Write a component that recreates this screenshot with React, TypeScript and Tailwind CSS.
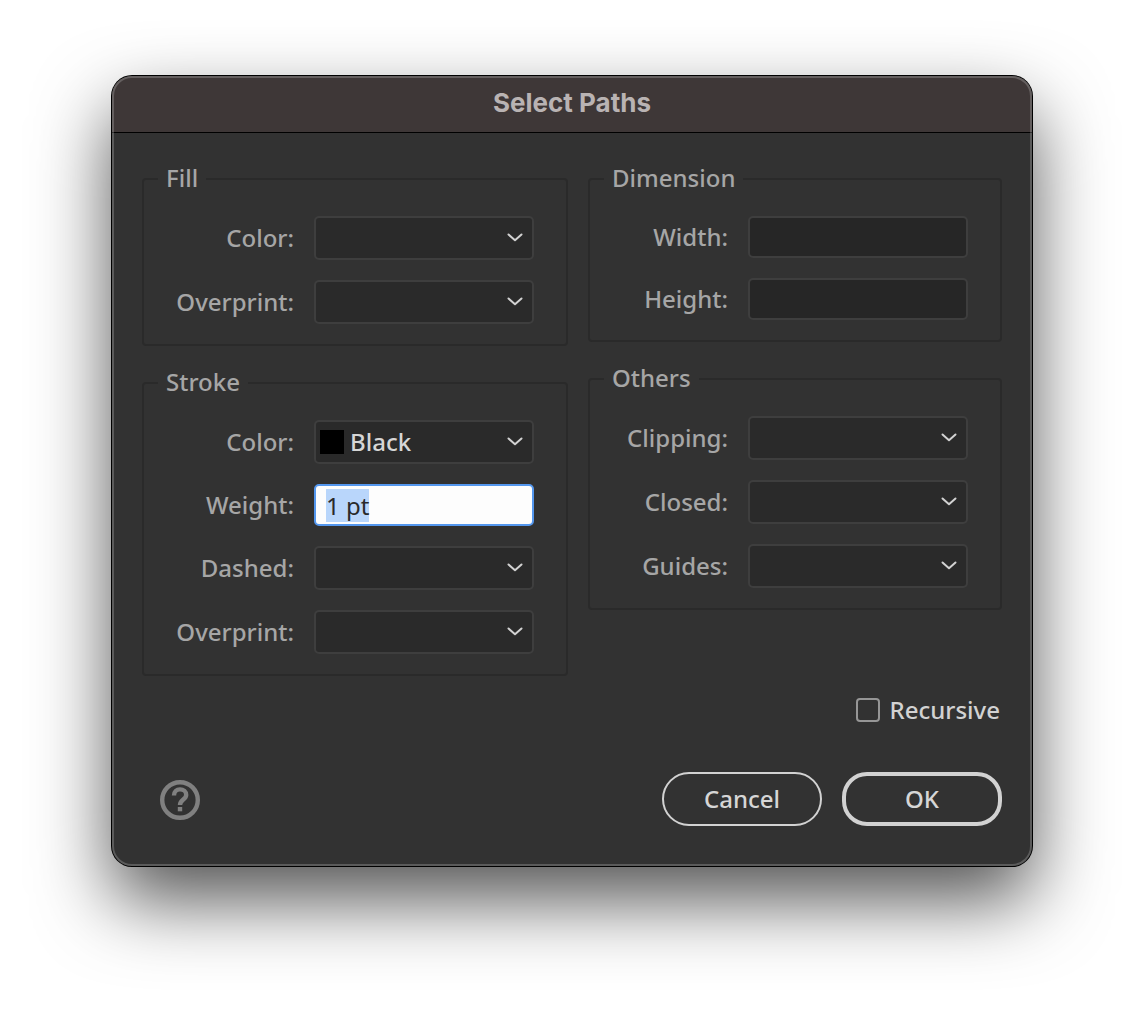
import { useEffect, useId, useRef, useState, type ReactNode } from "react";

function Group({ title, children }: { title: string; children: ReactNode }) {
  return (
    <fieldset className="min-w-0 rounded-[4px] border-2 border-[#2a2a2a] pt-6 pr-8 pb-5">
      <legend className="ml-3.5 px-2 pb-0.5 leading-6">{title}</legend>
      <div className="flex flex-col gap-5">{children}</div>
    </fieldset>
  );
}

function Row({ label, id, children }: { label: string; id: string; children: ReactNode }) {
  return (
    <div className="flex items-center justify-end gap-5">
      <label htmlFor={id}>{label}</label>
      <div className="relative w-[220px]">{children}</div>
    </div>
  );
}

function SelectRow({ label, options, swatch }: { label: string; options: string[]; swatch?: boolean }) {
  const id = useId();
  return (
    <Row label={label} id={id}>
      <select
        id={id}
        defaultValue={options[0]}
        className={
          "block h-11 w-full appearance-none rounded-[5px] border-2 border-[#3e3e3e] bg-[#2a2a2a] pr-10 text-[#d6d6d6] outline-none " +
          (swatch ? "pl-[34px]" : "pl-3")
        }
      >
        {options.map((o) => (
          <option key={o}>{o}</option>
        ))}
      </select>
      {swatch && <span className="pointer-events-none absolute top-2.5 left-1.5 size-6 bg-black" />}
      <svg
        className="pointer-events-none absolute top-4 right-2.5 h-3 w-[18px]"
        viewBox="0 0 18 12"
        fill="none"
        stroke="#d2d2d2"
        strokeWidth="2"
        strokeLinecap="round"
        strokeLinejoin="round"
        aria-hidden="true"
      >
        <path d="M2.5 2.5 9 8.3l6.5-5.8" />
      </svg>
    </Row>
  );
}

function TextRow({ label, initial = "", focused = false }: { label: string; initial?: string; focused?: boolean }) {
  const id = useId();
  const ref = useRef<HTMLInputElement>(null);
  const [value, setValue] = useState(initial);

  useEffect(() => {
    if (focused) {
      ref.current?.focus();
      ref.current?.select();
    }
  }, [focused]);

  return (
    <Row label={label} id={id}>
      <input
        ref={ref}
        id={id}
        type="text"
        value={value}
        onChange={(e) => setValue(e.target.value)}
        className="block h-[42px] w-full rounded-[5px] border-2 border-[#3e3e3e] bg-[#262626] px-2.5 font-normal text-[#d6d6d6] outline-none selection:bg-[#b9d6fb] selection:text-[#2a2a2a] focus:border-[#5497ee] focus:bg-[#fdfdfd] focus:text-[#2a2a2a]"
      />
    </Row>
  );
}

const onOff = ["", "On", "Off"];

export default function App() {
  return (
    <main className="min-h-screen bg-white px-28 pt-[76px] pb-28 font-['Noto_Sans',sans-serif] text-[24px] leading-[28px] font-medium text-[#a6a6a6]">
      <section
        role="dialog"
        aria-labelledby="dialog-title"
        className="relative rounded-[20px] bg-[#323232] shadow-[0_0_0_1px_#000,0_34px_76px_rgba(0,0,0,0.68)]"
      >
        <header className="flex h-[57px] items-center justify-center rounded-t-[20px] border-b border-black bg-[#3e3737] pb-0.5">
          <h1 id="dialog-title" className="font-[Inter,sans-serif] text-[26px] font-bold text-[#b9b3b3]">
            Select Paths
          </h1>
        </header>

        <form className="px-[30px] pt-[33px] pb-10" onSubmit={(e) => e.preventDefault()}>
          <div className="grid grid-cols-[426fr_414fr] items-start gap-5">
            <div className="flex flex-col gap-6">
              <Group title="Fill">
                <SelectRow label="Color:" options={["", "Black", "White"]} />
                <SelectRow label="Overprint:" options={onOff} />
              </Group>
              <Group title="Stroke">
                <SelectRow label="Color:" options={["Black", "White"]} swatch />
                <TextRow label="Weight:" initial="1 pt" focused />
                <SelectRow label="Dashed:" options={onOff} />
                <SelectRow label="Overprint:" options={onOff} />
              </Group>
            </div>
            <div className="flex flex-col gap-6">
              <Group title="Dimension">
                <TextRow label="Width:" />
                <TextRow label="Height:" />
              </Group>
              <Group title="Others">
                <SelectRow label="Clipping:" options={onOff} />
                <SelectRow label="Closed:" options={onOff} />
                <SelectRow label="Guides:" options={onOff} />
              </Group>
            </div>
          </div>

          <div className="mt-5 flex justify-end pr-0.5">
            <label className="flex items-center gap-2.5 text-[#d2d2d2]">
              <input
                type="checkbox"
                className="size-6 appearance-none rounded-[4px] border-2 border-[#969696] checked:bg-[#d2d2d2]"
              />
              Recursive
            </label>
          </div>

          <div className="mt-12 flex items-center gap-5 text-[#d6d6d6]">
            <button type="button" aria-label="Help" className="mr-auto ml-[18px]">
              <svg viewBox="0 0 40 42" className="h-[42px] w-10" fill="none" stroke="#808080" aria-hidden="true">
                <circle cx="20" cy="22" r="17.8" strokeWidth="4.4" />
                <path d="M14 17.4c0-3.6 2.5-6 6-6s6.2 2.2 6.2 5.5c0 4.6-6.2 4.8-6.2 10.1" strokeWidth="4.4" />
                <path d="M20 29v4.3" strokeWidth="4.4" />
              </svg>
            </button>
            <button type="button" className="h-[54px] w-40 rounded-full border-2 border-[#d2d2d2]">
              Cancel
            </button>
            <button type="submit" className="h-[54px] w-40 rounded-[25px] border-4 border-[#d2d2d2]">
              OK
            </button>
          </div>
        </form>
        <div className="pointer-events-none absolute inset-0 rounded-[20px] border-2 border-white/20" />
      </section>
    </main>
  );
}
